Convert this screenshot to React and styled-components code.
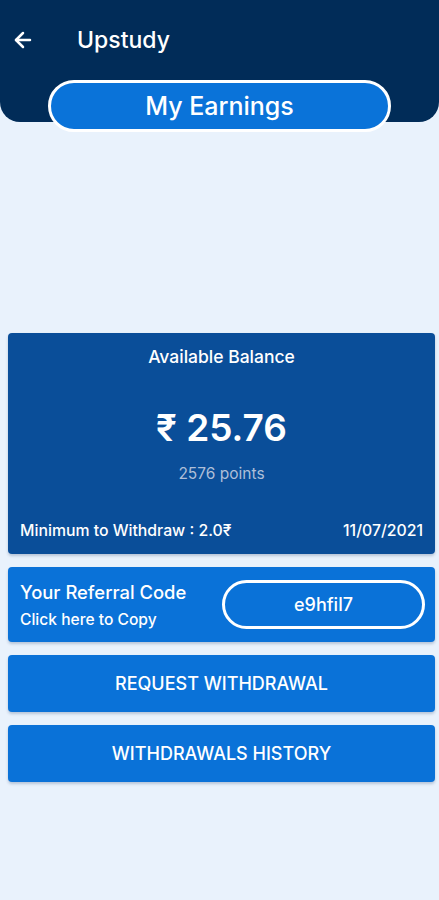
import React from "react";
import styled, { createGlobalStyle } from "styled-components";
import { ArrowLeft } from "lucide-react";

const Global = createGlobalStyle`
  html, body { margin: 0; padding: 0; }
  body {
    background: #e9f2fc;
    font-family: Inter, "Noto Sans", sans-serif;
    -webkit-font-smoothing: antialiased;
  }
`;

const Page = styled.div`
  min-height: 900px;
  width: 439px;
  background: #e9f2fc;
  display: flex;
  flex-direction: column;
`;

const Header = styled.header`
  background: #012c58;
  border-radius: 0 0 20px 20px;
  display: flex;
  flex-direction: column;
  align-items: center;
`;

const TopBar = styled.div`
  align-self: stretch;
  height: 80px;
  display: flex;
  align-items: center;
  padding-left: 11px;
  color: #fff;
`;

const BackButton = styled.button`
  background: none;
  border: 0;
  padding: 0;
  color: #fff;
  display: flex;
  width: 24px;
  margin-right: 42px;
  cursor: pointer;
`;

const Title = styled.h1`
  margin: 0;
  font-size: 23px;
  font-weight: 500;
  color: #fff;
`;

const TitlePill = styled.div`
  width: 343px;
  height: 52px;
  box-sizing: border-box;
  border: 3px solid #fff;
  border-radius: 26px;
  background: #0a73d9;
  margin-bottom: -10px;
  display: flex;
  align-items: center;
  justify-content: center;
  color: #fff;
  font-size: 25px;
  font-weight: 500;
`;

const Main = styled.main`
  margin-top: 211px;
  padding: 0 4px 0 8px;
  display: flex;
  flex-direction: column;
  gap: 13px;
`;

const Card = styled.div`
  background: ${(p) => p.$bg || "#0a72d8"};
  border-radius: 4px;
  box-shadow: 0 2px 3px rgba(0, 40, 90, 0.22);
  color: #fff;
  box-sizing: border-box;
`;

const BalanceCard = styled(Card)`
  height: 221px;
  padding: 12px 12px 13px;
  display: flex;
  flex-direction: column;
  align-items: center;
`;

const BalanceLabel = styled.div`
  font-size: 17.5px;
  line-height: 24px;
  font-weight: 500;
`;

const Amount = styled.div`
  margin-top: 36px;
  font-size: 37px;
  line-height: 46px;
  font-weight: 600;
`;

const Points = styled.div`
  margin-top: 13px;
  font-size: 15.5px;
  line-height: 20px;
  color: #aebfd8;
`;

const BalanceFooter = styled.div`
  margin-top: auto;
  align-self: stretch;
  display: flex;
  justify-content: space-between;
  font-size: 15.8px;
  line-height: 20px;
  font-weight: 500;
`;

const ReferralCard = styled(Card)`
  height: 75px;
  padding: 0 10px 0 12px;
  display: flex;
  align-items: center;
  justify-content: space-between;
`;

const ReferralText = styled.div`
  display: flex;
  flex-direction: column;
  gap: 8px;
`;

const ReferralTitle = styled.div`
  font-size: 18.4px;
  line-height: 22px;
  font-weight: 500;
`;

const ReferralHint = styled.div`
  font-size: 15.6px;
  line-height: 18px;
  font-weight: 500;
`;

const CodePill = styled.div`
  width: 203px;
  height: 49px;
  box-sizing: border-box;
  border: 3px solid #fff;
  border-radius: 25px;
  display: flex;
  align-items: center;
  justify-content: center;
  font-size: 18px;
  font-weight: 500;
`;

const ActionButton = styled(Card).attrs({ as: "button" })`
  height: 57px;
  border: 0;
  width: 100%;
  color: #fff;
  font-family: inherit;
  font-size: 18px;
  font-weight: 500;
  text-transform: uppercase;
  cursor: pointer;
`;

export default function App() {
  return (
    <Page>
      <Global />
      <Header>
        <TopBar>
          <BackButton aria-label="Back">
            <ArrowLeft size={24} strokeWidth={2.5} />
          </BackButton>
          <Title>Upstudy</Title>
        </TopBar>
        <TitlePill>My Earnings</TitlePill>
      </Header>
      <Main>
        <BalanceCard $bg="#0a4e99">
          <BalanceLabel>Available Balance</BalanceLabel>
          <Amount>₹ 25.76</Amount>
          <Points>2576 points</Points>
          <BalanceFooter>
            <span>Minimum to Withdraw : 2.0₹</span>
            <span>11/07/2021</span>
          </BalanceFooter>
        </BalanceCard>
        <ReferralCard>
          <ReferralText>
            <ReferralTitle>Your Referral Code</ReferralTitle>
            <ReferralHint>Click here to Copy</ReferralHint>
          </ReferralText>
          <CodePill>e9hfil7</CodePill>
        </ReferralCard>
        <ActionButton>Request Withdrawal</ActionButton>
        <ActionButton>Withdrawals History</ActionButton>
      </Main>
    </Page>
  );
}
